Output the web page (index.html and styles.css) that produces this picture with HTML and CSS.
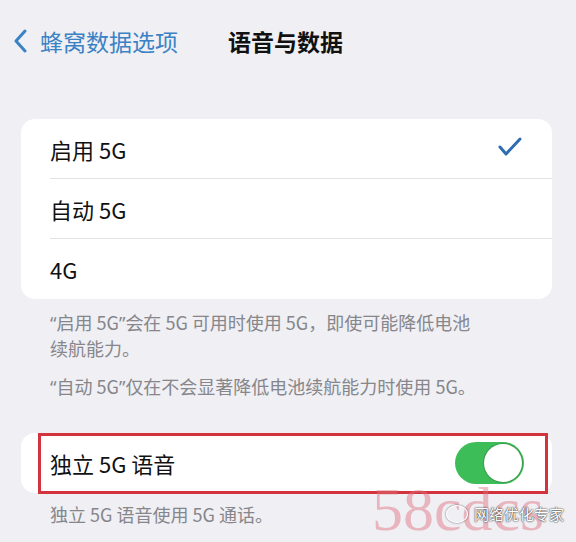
FILE: index.html
```html
<!DOCTYPE html>
<html lang="zh-CN">
<head>
    <meta charset="UTF-8">
    <meta name="viewport" content="width=device-width, initial-scale=1.0">
    <title>语音与数据</title>
    <link rel="stylesheet" href="styles.css">
</head>
<body>
    <div class="nav">
        <div class="back">
            <svg class="back-icon" width="14" height="24" viewBox="0 0 14 24">
                <path d="M12 2 L3 12 L12 22" fill="none" stroke="#3a82c4" stroke-width="3" stroke-linecap="round" stroke-linejoin="round"/>
            </svg>
            <span>蜂窝数据选项</span>
        </div>
        <div class="title">语音与数据</div>
    </div>

    <div class="card">
        <div class="row">
            <span>启用 5G</span>
            <svg class="check" width="24" height="20" viewBox="0 0 24 20">
                <path d="M2 10 L8 17 L22 2" fill="none" stroke="#2f6db3" stroke-width="3" stroke-linecap="round" stroke-linejoin="round"/>
            </svg>
        </div>
        <div class="row">
            <span>自动 5G</span>
        </div>
        <div class="row">
            <span>4G</span>
        </div>
    </div>
    <div class="note">
        <p><span class="q">“</span>启用 5G<span class="q">”</span>会在 5G 可用时使用 5G，即使可能降低电池<br>续航能力。</p>
        <p><span class="q">“</span>自动 5G<span class="q">”</span>仅在不会显著降低电池续航能力时使用 5G。</p>
    </div>

    <div class="card card-voice">
        <div class="row">
            <span>独立 5G 语音</span>
            <div class="switch"><div class="knob"></div></div>
        </div>
        <div class="highlight"></div>
    </div>
    <div class="note note-last">
        <p>独立 5G 语音使用 5G 通话。</p>
    </div>

    <div class="mark">58cdcs</div>
    <div class="brand">
        <span class="brand-dot"></span>
        <span>网络优化专家</span>
    </div>
</body>
</html>
```

FILE: styles.css
```css
body{
    margin: 0;
    width: 576px;
    height: 542px;
    overflow: hidden;
    background-color: #efeff4;
    font-family: "Noto Sans CJK SC", "Noto Sans", sans-serif;
    color: #111;
    position: relative;
}
.nav{
    height: 82px;
    display: flex;
    align-items: center;
    padding-left: 13px;
}
.back{
    display: flex;
    align-items: center;
    gap: 13px;
    color: #3a82c4;
    font-size: 23px;
    width: 215px;
}
.title{
    font-size: 23px;
    font-weight: bold;
    color: #111;
}
.card{
    margin: 37px 24px 0 21px;
    background-color: #fff;
    border-radius: 14px;
    position: relative;
}
.row{
    height: 60px;
    margin-left: 29px;
    padding-right: 30px;
    display: flex;
    align-items: center;
    justify-content: space-between;
    font-size: 22px;
    border-bottom: 1px solid #e3e3e6;
    box-sizing: border-box;
}
.row:last-child{
    border-bottom: none;
}
.check{
    margin-top: -3px;
}
.note{
    padding: 11px 30px 0 50px;
    font-size: 18px;
    line-height: 25px;
    color: #86868b;
}
.note p{
    margin: 0 0 13px 0;
}
.q{
    font-family: "Noto Sans", sans-serif;
}
.card-voice{
    margin-top: 33px;
}
.card-voice .row{
    padding-right: 28px;
}
.switch{
    width: 69px;
    height: 42px;
    border-radius: 21px;
    background-color: #3cbd57;
    display: flex;
    align-items: center;
    justify-content: flex-end;
    padding: 2px;
    box-sizing: border-box;
}
.knob{
    width: 38px;
    height: 38px;
    border-radius: 50%;
    background-color: #fff;
    box-shadow: 0 0 0 1px rgba(60, 120, 70, 0.5);
}
.highlight{
    position: absolute;
    top: 0;
    bottom: -1px;
    left: 17px;
    right: 4px;
    border: 3px solid #d2333d;
}
.note-last{
    padding-top: 9px;
}
.mark{
    position: absolute;
    left: 372px;
    top: 474px;
    font-family: "Liberation Serif", serif;
    font-size: 62px;
    color: rgba(225, 110, 125, 0.45);
}
.brand{
    position: absolute;
    left: 446px;
    top: 503px;
    display: flex;
    align-items: center;
    gap: 6px;
    font-size: 15px;
    color: #fff;
    text-shadow: 0 0 2px #333, 0 0 1px #333;
}
.brand-dot{
    width: 20px;
    height: 16px;
    border-radius: 50%;
    border: 1px solid #fff;
    box-shadow: 0 0 2px #444;
}
```
